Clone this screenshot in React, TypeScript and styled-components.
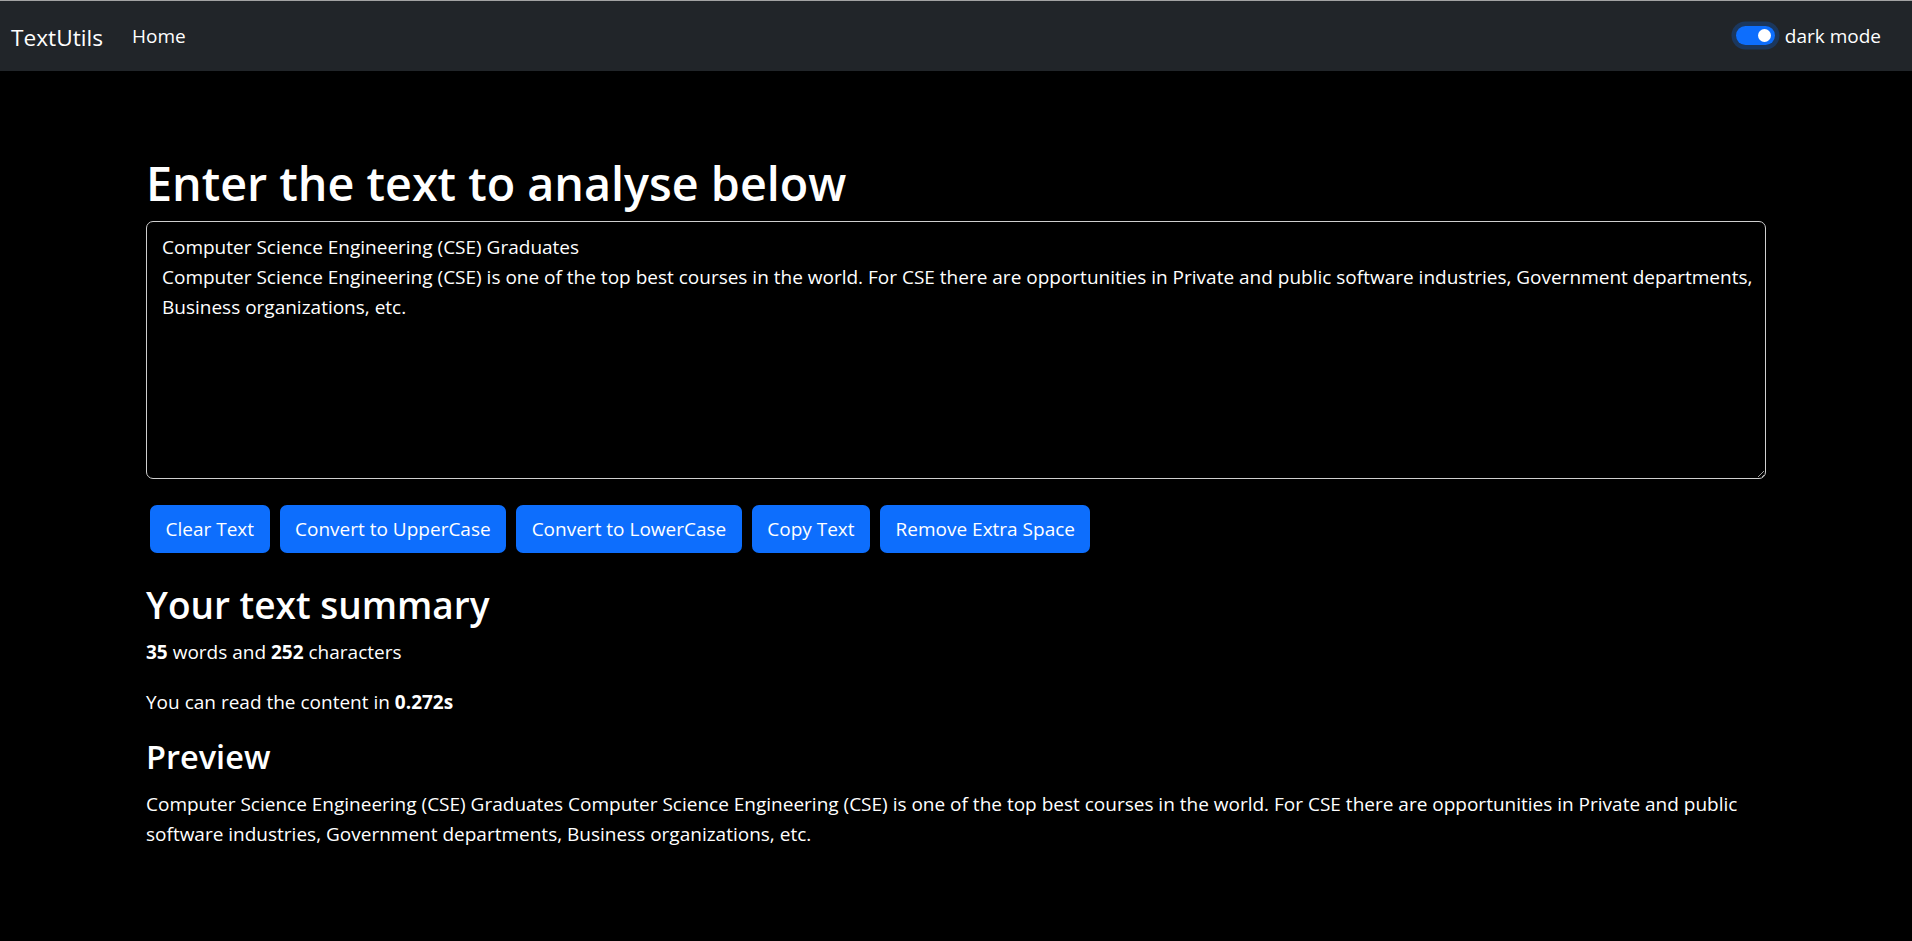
import React from "react";
import styled, { createGlobalStyle } from "styled-components";

const BASE = "19px";

const GlobalStyle = createGlobalStyle`
  html, body {
    margin: 0;
    padding: 0;
    background: #000;
    color: #fff;
    font-family: "Open Sans", "Noto Sans", sans-serif;
  }
  * { box-sizing: border-box; }
`;

const Nav = styled.nav`
  height: 71px;
  border-top: 1px solid #a3a3a3;
  background: #212529;
  display: flex;
  align-items: center;
  padding: 0 31px 0 11px;
`;

const Brand = styled.a`
  font-size: 22.7px;
  color: #fff;
  text-decoration: none;
  margin-right: 29px;
  padding-top: 2px;
`;

const NavLink = styled.a`
  font-size: ${BASE};
  color: #fff;
  text-decoration: none;
`;

const Spacer = styled.div`
  flex: 1;
`;

const SwitchLabel = styled.label`
  display: flex;
  align-items: center;
  gap: 10px;
  font-size: ${BASE};
  color: #fff;
`;

const Track = styled.span<{ $on: boolean }>`
  position: relative;
  display: inline-block;
  width: 39px;
  height: 19px;
  border-radius: 10px;
  background: ${(p) => (p.$on ? "#0d6efd" : "#212529")};
  box-shadow: 0 0 0 4.5px rgba(13, 110, 253, 0.25);
  margin-top: -2px;
  &::after {
    content: "";
    position: absolute;
    top: 3px;
    left: ${(p) => (p.$on ? "22px" : "3px")};
    width: 13.5px;
    height: 13.5px;
    border-radius: 50%;
    background: #fff;
  }
`;

const Container = styled.main`
  width: 1620px;
  margin: 0 auto;
  padding-top: 84px;
`;

const Heading = styled.h1`
  margin: 0 0 10px;
  font-size: 46.7px;
  font-weight: 600;
  line-height: 1.2;
`;

const TextArea = styled.textarea`
  display: block;
  width: 100%;
  height: 258px;
  margin: 0;
  padding: 10px 6px 6px 15px;
  background: #000;
  color: #fff;
  border: 1px solid #cfcfcf;
  border-radius: 7px;
  font-family: inherit;
  font-size: ${BASE};
  line-height: 30px;
  outline: none;
`;

const ButtonRow = styled.div`
  display: flex;
  gap: 10px;
  padding-left: 4px;
  margin-top: 26px;
`;

const Button = styled.button`
  height: 47.5px;
  padding: 0 15.5px;
  border: none;
  border-radius: 7px;
  background: #0d6efd;
  color: #fff;
  font-family: inherit;
  font-size: ${BASE};
  cursor: pointer;
`;

const Summary = styled.section`
  margin-top: 30px;
`;

const SubHeading = styled.h2<{ $size: number; $mt: number; $mb: number }>`
  margin: ${(p) => p.$mt}px 0 ${(p) => p.$mb}px;
  font-size: ${(p) => p.$size}px;
  font-weight: 600;
  line-height: 1.2;
`;

const Para = styled.p`
  margin: 0 0 20px;
  font-size: ${BASE};
  line-height: 30px;
`;

const text =
  "Computer Science Engineering (CSE) Graduates\nComputer Science Engineering (CSE) is one of the top best courses in the world. For CSE there are opportunities in Private and public software industries, Government departments, Business organizations, etc.";

export default function App() {
  const preview = text.replace(/\n/g, " ");
  return (
    <>
      <GlobalStyle />
      <Nav>
        <Brand href="#">TextUtils</Brand>
        <NavLink href="#">Home</NavLink>
        <Spacer />
        <SwitchLabel>
          <Track $on role="switch" aria-checked="true" />
          dark mode
        </SwitchLabel>
      </Nav>
      <Container>
        <Heading>Enter the text to analyse below</Heading>
        <TextArea defaultValue={text} rows={8} />
        <ButtonRow>
          <Button>Clear Text</Button>
          <Button>Convert to UpperCase</Button>
          <Button>Convert to LowerCase</Button>
          <Button>Copy Text</Button>
          <Button>Remove Extra Space</Button>
        </ButtonRow>
        <Summary>
          <SubHeading $size={37} $mt={0} $mb={10}>Your text summary</SubHeading>
          <Para>
            <b>35</b> words and <b>252</b> characters
          </Para>
          <Para>
            You can read the content in <b>0.272s</b>
          </Para>
          <SubHeading as="h3" $size={32.5} $mt={6} $mb={13}>Preview</SubHeading>
          <Para>{preview}</Para>
        </Summary>
      </Container>
    </>
  );
}
